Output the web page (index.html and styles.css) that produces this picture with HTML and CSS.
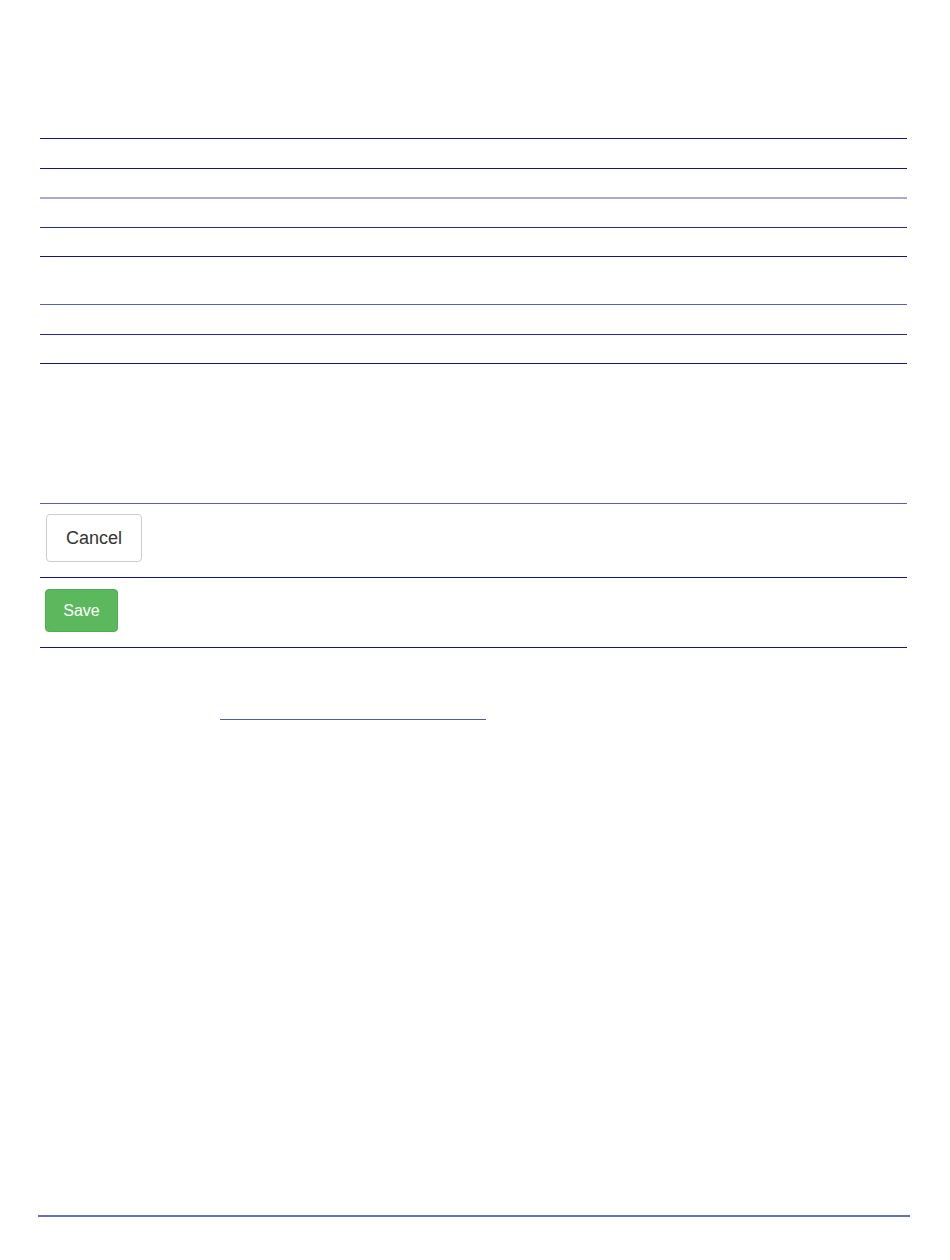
FILE: index.html
```html
<!DOCTYPE html>
<html lang="en">
<head>
<meta charset="utf-8">
<title>Form</title>
<link rel="stylesheet" href="styles.css">
</head>
<body>
<div class="page">
  <div class="grid">
    <div class="row h30 navy"></div>
    <div class="row h29 navy"></div>
    <div class="row h30 pale"></div>
    <div class="row h29 mixed"></div>
    <div class="row h48 navy"></div>
    <div class="row h30 mid"></div>
    <div class="row h29 mixed"></div>
    <div class="row-end navy"></div>
  </div>
  <div class="actions">
    <div class="arow cancel-row mid">
      <button class="btn btn-default" type="button">Cancel</button>
    </div>
    <div class="arow save-row navy">
      <button class="btn btn-success" type="button">Save</button>
    </div>
    <div class="row-end navy"></div>
  </div>
  <div class="linkline"><a class="blank-link" href="#"></a></div>
  <div class="footer-line"></div>
</div>
</body>
</html>
```

FILE: styles.css
```css
html, body {
  margin: 0;
  padding: 0;
  background: #ffffff;
  font-family: "Liberation Sans", Arial, sans-serif;
}

.page {
  padding-top: 138px;
}

.grid,
.actions {
  margin-left: 40px;
  width: 867px;
}

.row {
  box-sizing: border-box;
  border-top: 1px solid #1b1b8a;
}

.h29 { height: 29px; }
.h30 { height: 30px; }
.h48 { height: 48px; }

.navy { border-top-color: #14148a; }
.pale { border-top: 2px solid #a9a9d4; }
.mixed { border-top: 1px solid #2a2a95; box-shadow: inset 0 0 0 0 transparent; }
.mid { border-top-color: #5b5cbd; }

.row-end {
  border-top: 1px solid #14148a;
  height: 0;
}

.actions {
  margin-top: 139px;
}

.arow {
  box-sizing: border-box;
  border-top: 1px solid #14148a;
  padding-left: 6px;
}

.cancel-row {
  height: 74px;
  padding-top: 10px;
  border-top-color: #5b5cbd;
}

.save-row {
  height: 70px;
  padding-top: 11px;
  padding-left: 5px;
}

.btn {
  display: inline-block;
  font-family: "Liberation Sans", Arial, sans-serif;
  border-radius: 4px;
  cursor: pointer;
  margin: 0;
}

.btn-default {
  font-size: 18px;
  line-height: 25px;
  padding: 10px 17px 10px 17px;
  color: #333333;
  background: #ffffff;
  border: 1px solid #cccccc;
  width: 96px;
  height: 48px;
}

.btn-success {
  font-size: 16px;
  line-height: 21px;
  padding: 10px 15px;
  color: #ffffff;
  background: #5cb85c;
  border: 1px solid #4cae4c;
  width: 73px;
  height: 43px;
}

.linkline {
  margin-left: 220px;
  margin-top: 71px;
  width: 266px;
  height: 1px;
}

.blank-link {
  display: block;
  height: 0;
  border-top: 1px solid #5557b8;
}

.footer-line {
  margin-top: 495px;
  margin-left: 38px;
  width: 872px;
  height: 0;
  border-top: 2px solid #6a6cbc;
}
```
